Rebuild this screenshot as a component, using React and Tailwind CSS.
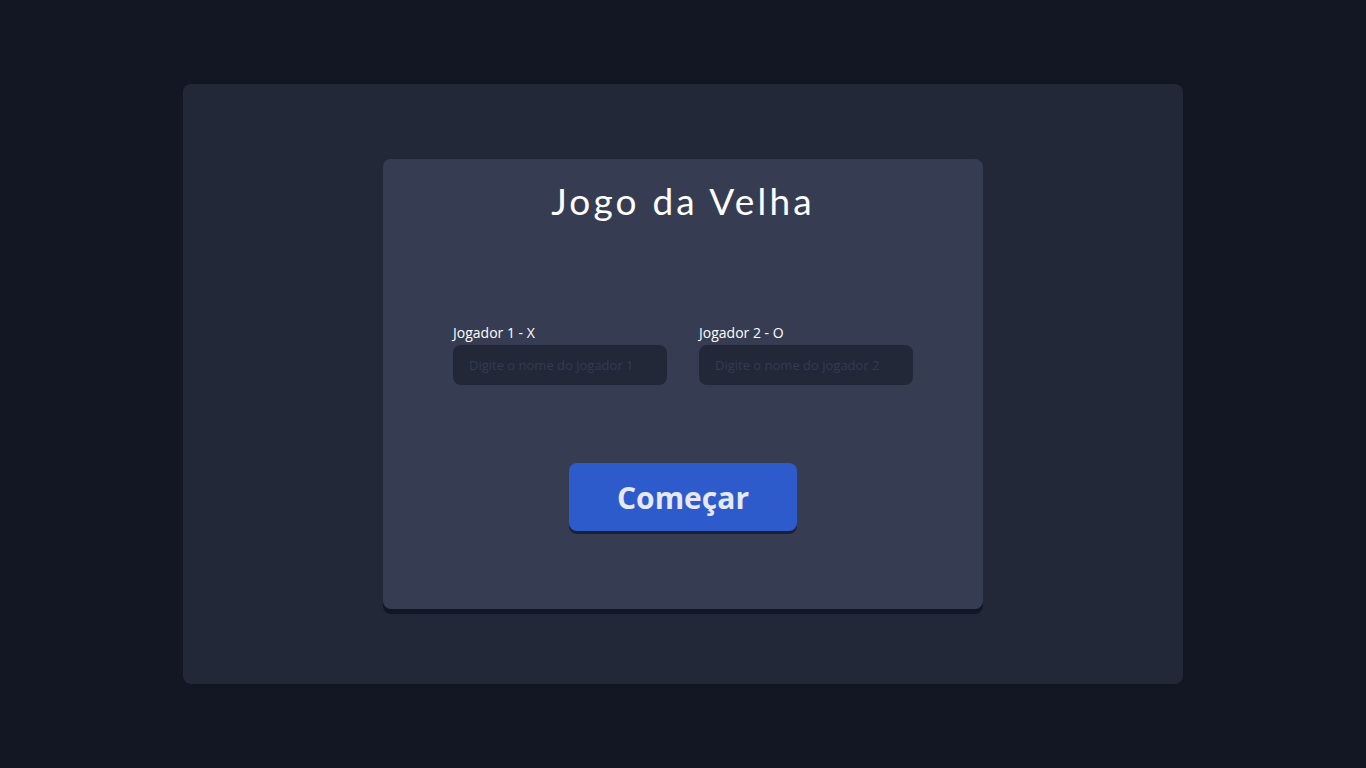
export default function App() {
  return (
    <div className="w-full h-[768px] bg-[#121723] flex items-center justify-center" style={{ fontFamily: '"Open Sans", sans-serif' }}>
      <div className="w-[1000px] h-[600px] bg-[#222838] rounded-lg flex items-center justify-center">
        <div className="w-[600px] h-[450px] bg-[#363d52] rounded-lg shadow-[0_5px_0_#121723] flex flex-col items-center">
          <h1 className="mt-[20px] text-[37px] leading-[44px] text-white tracking-[3.2px]" style={{ fontFamily: '"Lato", sans-serif' }}>Jogo da Velha</h1>
          <div className="mt-[100px] flex gap-[32px]">
            <div className="flex flex-col">
              <label className="text-[14px] leading-[19px] text-white mb-[3px]">Jogador 1 - X</label>
              <input className="w-[214px] h-[40px] rounded-lg bg-[#222838] px-4 text-[13px] text-gray-200 placeholder:text-[#333b50] outline-none" placeholder="Digite o nome do jogador 1" />
            </div>
            <div className="flex flex-col">
              <label className="text-[14px] leading-[19px] text-white mb-[3px]">Jogador 2 - O</label>
              <input className="w-[214px] h-[40px] rounded-lg bg-[#222838] px-4 text-[13px] text-gray-200 placeholder:text-[#333b50] outline-none" placeholder="Digite o nome do jogador 2" />
            </div>
          </div>
          <button className="mt-[78px] w-[228px] h-[68px] rounded-lg bg-[#2e5bcc] shadow-[0_3px_0_#1c2130] text-[30px] font-bold text-[#e6e8f2]">Começar</button>
        </div>
      </div>
    </div>
  );
}
